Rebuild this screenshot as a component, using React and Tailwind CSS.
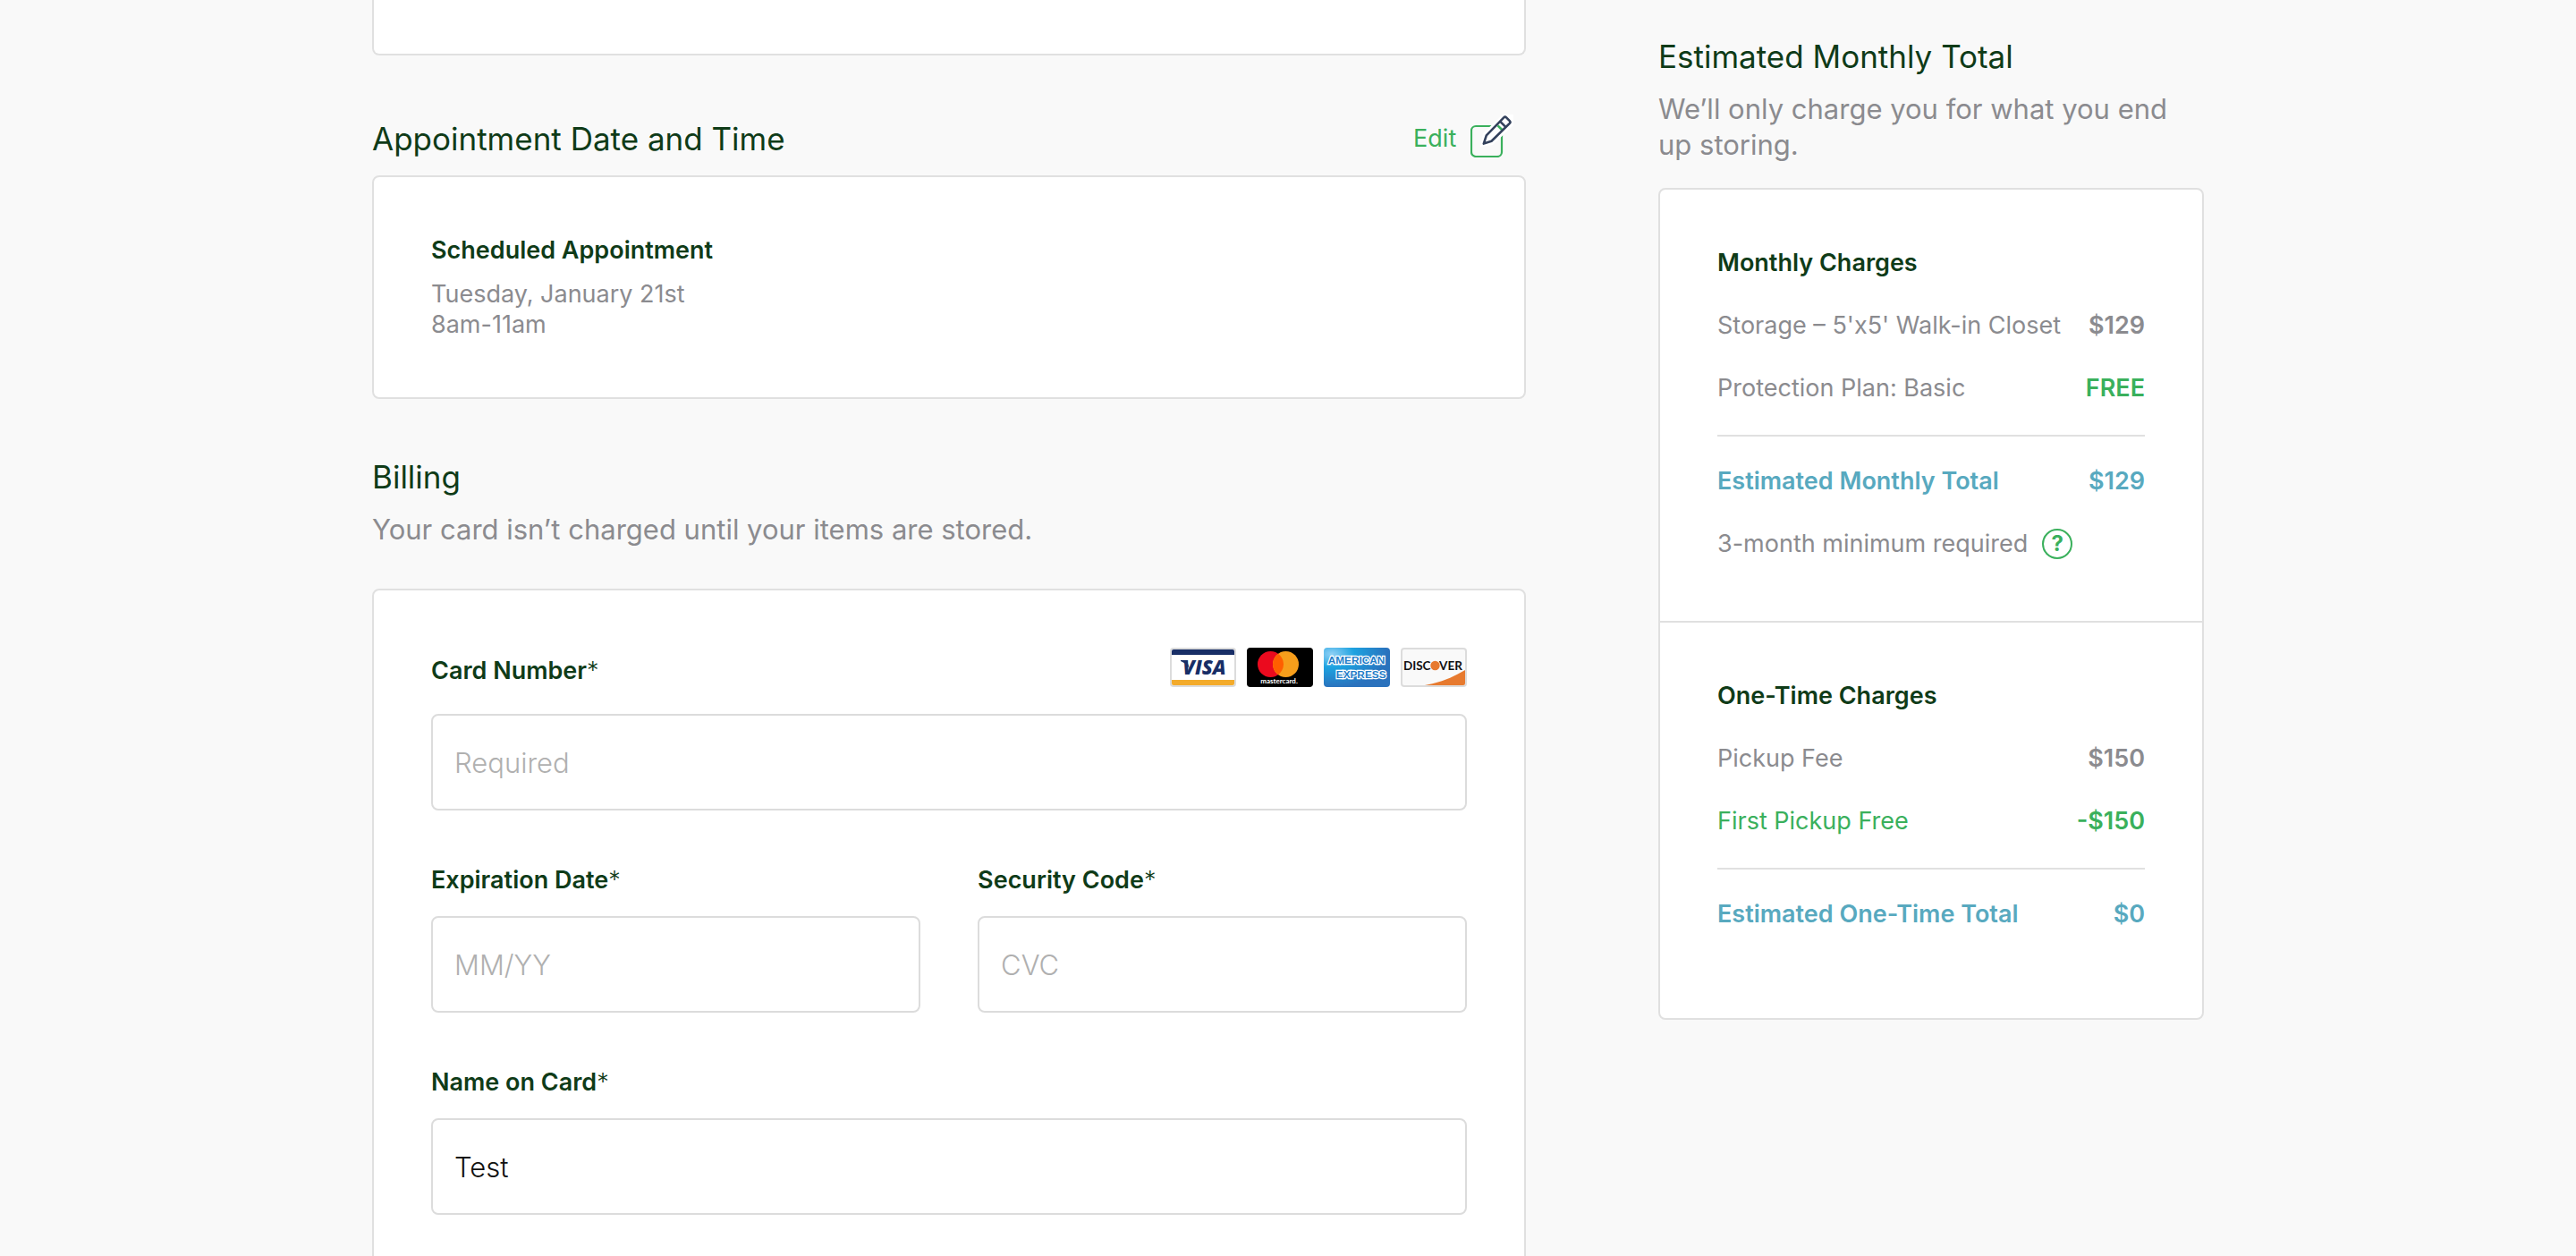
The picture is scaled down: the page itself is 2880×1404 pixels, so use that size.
const fieldClass =
  'h-[108px] w-full min-w-0 rounded-lg border-2 border-[#dcdcdc] bg-white px-6 text-[31px] font-light text-[#111111] placeholder:text-[#b0b0b0] placeholder:opacity-100 outline-none focus:border-[#3ab05c]';

function Card({ className = '', children }) {
  return (
    <div className={`rounded-lg border-2 border-[#e0e0e0] bg-white ${className}`}>{children}</div>
  );
}

function Field({ id, label, placeholder, defaultValue, children }) {
  return (
    <div className="min-w-0">
      <div className={children ? 'mb-[30px] flex items-end justify-between' : 'mb-[22px] flex'}>
        <label htmlFor={id} className="leading-9 font-semibold text-[#0f3b18]">
          {label}
          <span className="font-light">*</span>
        </label>
        {children}
      </div>
      <input
        id={id}
        type="text"
        placeholder={placeholder}
        defaultValue={defaultValue}
        className={fieldClass}
      />
    </div>
  );
}

function Row({ label, value, valueClass = 'text-[#8b8b8f]', className = 'text-[#8b8b8f]' }) {
  return (
    <div className={`flex justify-between gap-4 ${className}`}>
      <dt>{label}</dt>
      <dd className={`font-semibold ${valueClass}`}>{value}</dd>
    </div>
  );
}

function EditIcon() {
  return (
    <svg width="48" height="48" viewBox="0 0 48 48" fill="none" aria-hidden="true">
      <rect x="1" y="13" width="34" height="34" rx="5" stroke="#3ab05c" strokeWidth="2.2" />
      <path d="M11 36 L14 21 L36 0 H48 V12 L25 34 Z" fill="#fff" />
      <path d="M30.5 12.3l4.7 4.7" stroke="#3ab05c" strokeWidth="2.6" />
      <path
        d="M14.8 32.6l3-9.2L37.3 3.4a2 2 0 0 1 2.8 0l3.7 3.7a2 2 0 0 1 0 2.8L23.5 29.8z"
        stroke="#33415c"
        strokeWidth="2.6"
        strokeLinejoin="round"
      />
      <path d="M33.3 7.8l6 6" stroke="#33415c" strokeWidth="2.6" />
    </svg>
  );
}

function Visa() {
  return (
    <svg width="74" height="44" viewBox="0 0 74 44" role="img" aria-label="Visa">
      <rect width="74" height="44" rx="4" fill="#dcdcdc" />
      <rect x="2" y="2" width="70" height="40" rx="2" fill="#fff" />
      <path d="M4 2h66a2 2 0 0 1 2 2v4H2V4a2 2 0 0 1 2-2z" fill="#182e66" />
      <path d="M2 36h70v4a2 2 0 0 1-2 2H4a2 2 0 0 1-2-2z" fill="#f3ab2b" />
      <path d="M12 14h7l3 10c-2-4-5-7-10-9z" fill="#182e66" />
      <text x="38.5" y="30" textAnchor="middle" fontSize="22" className="font-['Open_Sans'] font-extrabold italic" fill="#182e66">
        VISA
      </text>
    </svg>
  );
}

function Mastercard() {
  return (
    <svg width="74" height="44" viewBox="0 0 74 44" role="img" aria-label="Mastercard">
      <rect width="74" height="44" rx="4" fill="#000" />
      <circle cx="26.5" cy="18.5" r="14.5" fill="#eb0a1e" />
      <circle cx="43.5" cy="18.5" r="14.5" fill="#f79e1b" />
      <path d="M35 6.75a14.5 14.5 0 0 1 0 23.5a14.5 14.5 0 0 1 0-23.5z" fill="#ff5f00" />
      <text x="36" y="40" textAnchor="middle" fontSize="8" className="font-[Lato] font-bold" fill="#fff">
        mastercard.
      </text>
    </svg>
  );
}

function Amex() {
  return (
    <svg width="74" height="44" viewBox="0 0 74 44" role="img" aria-label="American Express">
      <defs>
        <radialGradient id="amex-sheen" cx="12%" cy="16%" r="85%">
          <stop offset="0" stopColor="#8fd0f5" />
          <stop offset="0.4" stopColor="#1da2e0" />
          <stop offset="1" stopColor="#2a72bd" />
        </radialGradient>
      </defs>
      <rect width="74" height="44" rx="4" fill="url(#amex-sheen)" />
      <g
        className="font-['Liberation_Sans'] font-bold"
        fontSize="11.8"
        fill="#1f7cc8"
        stroke="#fff"
        strokeWidth="2.4"
        paintOrder="stroke"
      >
        <text x="36.5" y="18" textAnchor="middle">AMERICAN</text>
        <text x="69.5" y="34" textAnchor="end">EXPRESS</text>
      </g>
    </svg>
  );
}

function Discover() {
  return (
    <svg width="74" height="44" viewBox="0 0 74 44" role="img" aria-label="Discover">
      <rect width="74" height="44" rx="4" fill="#dcdcdc" />
      <rect x="2" y="2" width="70" height="40" rx="2" fill="#f9f9f9" />
      <path d="M27 42c17-3 32-9 45-17v15a2 2 0 0 1-2 2z" fill="#e77a2f" />
      <g className="font-[Lato] font-bold" fontSize="13.5" fill="#111">
        <text x="33.5" y="25" textAnchor="end">DISC</text>
        <text x="43" y="25">VER</text>
      </g>
      <circle cx="38.5" cy="20" r="5.2" fill="#e77a2f" />
    </svg>
  );
}

export default function App() {
  return (
    <div className="h-screen overflow-hidden bg-[#f9f9f9] font-[Inter,sans-serif] text-[27px] leading-[34px] text-[#8b8b8f]">
      <div className="mx-auto flex w-full max-w-[2048px] items-start justify-between gap-16">
        <main className="w-[63%] min-w-0">
          <div className="h-[62px] rounded-b-lg border-2 border-t-0 border-[#e0e0e0] bg-white" />

          <section className="mt-[66px]">
            <div className="mb-[14px] flex items-start justify-between pr-3.5">
              <h2 className="text-[35px] leading-[54px] text-[#0f3b18]">Appointment Date and Time</h2>
              <button type="button" className="flex items-end gap-4 leading-[42px] text-[#3ab05c]">
                Edit
                <EditIcon />
              </button>
            </div>
            <Card className="p-16">
              <h3 className="mb-[14px] leading-9 font-semibold text-[#0f3b18]">Scheduled Appointment</h3>
              <p>Tuesday, January 21st</p>
              <p>8am-11am</p>
            </Card>
          </section>

          <section className="mt-[60px]">
            <h2 className="text-[35px] leading-[54px] text-[#0f3b18]">Billing</h2>
            <p className="mt-3 mb-[46px] text-[31px] leading-[40px]">
              Your card isn’t charged until your items are stored.
            </p>
            <Card className="p-16">
              <form className="flex flex-col gap-[60px]">
                <Field id="card-number" label="Card Number" placeholder="Required">
                  <div className="flex gap-3">
                    <Visa />
                    <Mastercard />
                    <Amex />
                    <Discover />
                  </div>
                </Field>
                <div className="grid grid-cols-2 gap-16">
                  <Field id="expiration" label="Expiration Date" placeholder="MM/YY" />
                  <Field id="security-code" label="Security Code" placeholder="CVC" />
                </div>
                <Field id="card-name" label="Name on Card" defaultValue="Test" />
              </form>
            </Card>
          </section>
        </main>

        <aside className="w-[610px] shrink-0 pt-9 leading-9">
          <h2 className="text-[35px] leading-[54px] text-[#0f3b18]">Estimated Monthly Total</h2>
          <p className="mt-3 mb-7 text-[31px] leading-[40px]">
            We’ll only charge you for what you end up storing.
          </p>
          <Card>
            <section className="border-b-2 border-[#e0e0e0] px-16 pt-16 pb-[68px]">
              <h3 className="mb-[34px] font-semibold text-[#0f3b18]">Monthly Charges</h3>
              <dl className="flex flex-col gap-[34px]">
                <Row label="Storage – 5'x5' Walk-in Closet" value="$129" />
                <Row label="Protection Plan: Basic" value="FREE" valueClass="text-[#3ab05c]" />
                <Row
                  label="Estimated Monthly Total"
                  value="$129"
                  className="border-t-2 border-[#e0e0e0] pt-8 font-semibold text-[#58a9bf]"
                  valueClass="text-[#58a9bf]"
                />
              </dl>
              <div className="mt-[34px] flex items-center gap-4">
                <p>3-month minimum required</p>
                <button
                  type="button"
                  aria-label="About the 3-month minimum"
                  className="flex size-[34px] items-center justify-center rounded-full border-2 border-[#3ab05c] text-2xl leading-none font-bold text-[#3ab05c]"
                >
                  ?
                </button>
              </div>
            </section>
            <section className="px-16 pt-16 pb-[98px]">
              <h3 className="mb-[34px] font-semibold text-[#0f3b18]">One-Time Charges</h3>
              <dl className="flex flex-col gap-[34px]">
                <Row label="Pickup Fee" value="$150" />
                <Row
                  label="First Pickup Free"
                  value="-$150"
                  className="text-[#3ab05c]"
                  valueClass="text-[#3ab05c]"
                />
                <Row
                  label="Estimated One-Time Total"
                  value="$0"
                  className="border-t-2 border-[#e0e0e0] pt-8 font-semibold text-[#58a9bf]"
                  valueClass="text-[#58a9bf]"
                />
              </dl>
            </section>
          </Card>
        </aside>
      </div>
    </div>
  );
}
